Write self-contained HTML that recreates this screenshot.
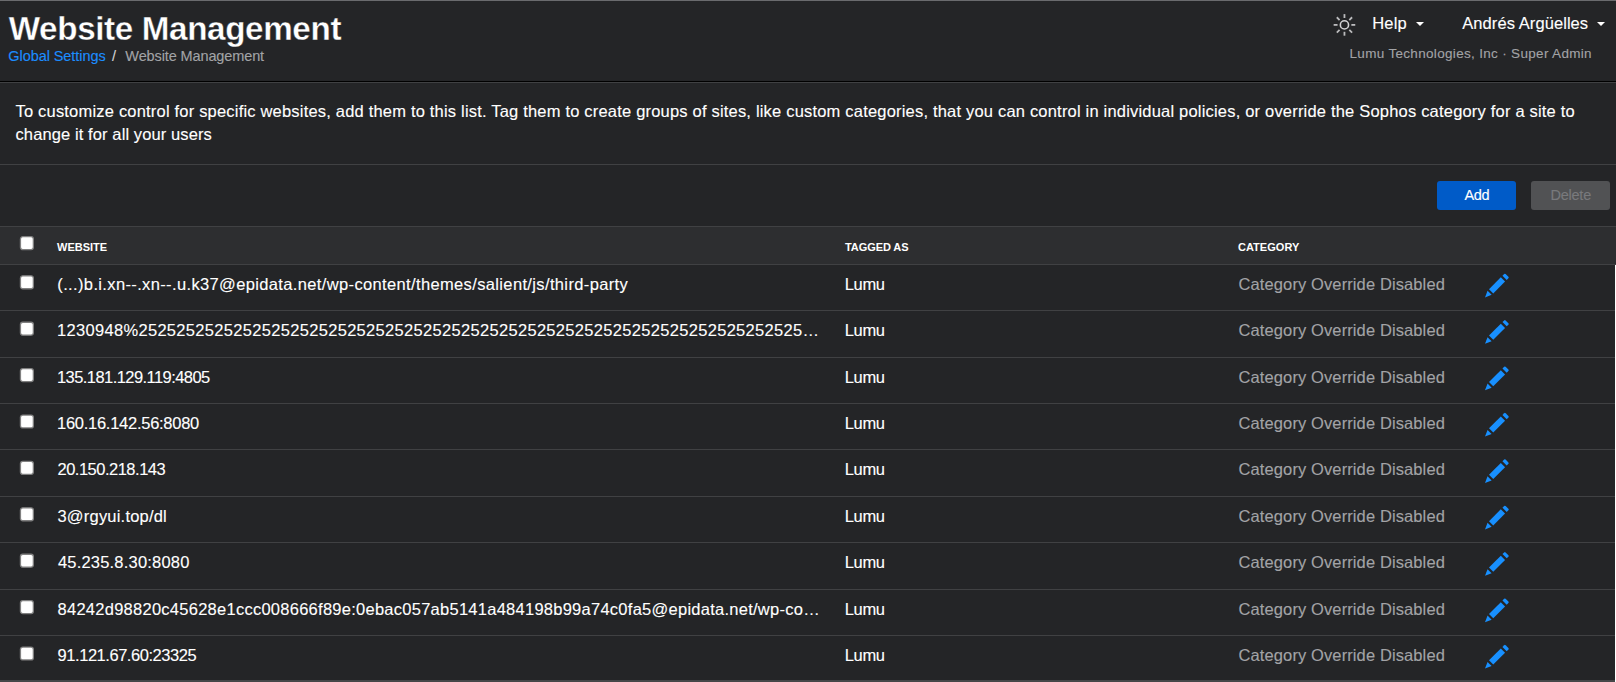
<!DOCTYPE html><html lang="en"><head><meta charset="utf-8"><title>Website Management</title><style>
html,body{margin:0;padding:0;background:#242527;}
body{width:1616px;height:682px;overflow:hidden;background:#242527;color:#fff;font-family:"Liberation Sans",sans-serif;position:relative;}
.a{position:absolute;white-space:nowrap;}
.t{position:absolute;white-space:nowrap;line-height:1;-webkit-text-stroke:0.12px currentColor;}
.ln{position:absolute;left:0;width:1616px;height:1px;}
.cb{position:absolute;left:18px;}
</style></head><body>
<div class="ln" style="top:0;background:#6a6b6e"></div>
<svg class="a" style="left:1332px;top:12px" width="26" height="26" viewBox="0 0 26 26"><g fill="none"><circle cx="12.45" cy="12.9" r="4.1" stroke="#d2d2d4" stroke-width="1.6"/><g stroke="#bcbcbe" stroke-width="1.8"><line x1="19.35" y1="12.90" x2="23.25" y2="12.90"/><line x1="17.33" y1="17.78" x2="20.09" y2="20.54"/><line x1="12.45" y1="19.80" x2="12.45" y2="23.70"/><line x1="7.57" y1="17.78" x2="4.81" y2="20.54"/><line x1="5.55" y1="12.90" x2="1.65" y2="12.90"/><line x1="7.57" y1="8.02" x2="4.81" y2="5.26"/><line x1="12.45" y1="6.00" x2="12.45" y2="2.10"/><line x1="17.33" y1="8.02" x2="20.09" y2="5.26"/></g></g></svg>
<div class="a" style="left:1415.5px;top:22px;width:0;height:0;border-left:4px solid transparent;border-right:4px solid transparent;border-top:4px solid #fff"></div>
<div class="a" style="left:1597px;top:22px;width:0;height:0;border-left:4px solid transparent;border-right:4px solid transparent;border-top:4px solid #fff"></div>
<div class="ln" style="top:81px;background:#000"></div>
<div class="ln" style="top:82px;background:#404143"></div>
<div class="ln" style="top:164px;background:#404143"></div>
<div class="a" style="left:1437px;top:181px;width:79px;height:29px;background:#005bc8;border-radius:3px;"></div>
<div class="a" style="left:1531px;top:181px;width:79px;height:29px;background:#515254;border-radius:3px;"></div>
<div class="ln" style="top:226px;background:#404143"></div>
<div class="ln" style="top:227px;height:37px;background:#2d2e30"></div>
<svg class="cb" style="top:234px" width="18" height="19" viewBox="0 0 18 19"><rect x="2.45" y="2.70" width="12.9" height="12.9" rx="2.3" fill="#fff" stroke="#808080" stroke-width="1.3"/></svg>
<div class="ln" style="top:264px;background:#404143"></div>
<svg class="cb" style="top:273px" width="18" height="19" viewBox="0 0 18 19"><rect x="2.45" y="2.85" width="12.9" height="12.9" rx="2.3" fill="#fff" stroke="#808080" stroke-width="1.3"/></svg>
<svg class="a" style="left:1480px;top:268px" width="36" height="36" viewBox="0 0 36 36"><g transform="translate(5,29.40) rotate(-45)" fill="#1890ff"><polygon points="0,0 6.5,-2.9 6.5,2.9"/><rect x="8.65" y="-3" width="16.7" height="6"/><path d="M27.7 -3 H30.1 a1 1 0 0 1 1 1 V2 a1 1 0 0 1 -1 1 H27.7 Z"/></g></svg>
<div class="ln" style="top:310px;background:#404143"></div>
<svg class="cb" style="top:319px" width="18" height="19" viewBox="0 0 18 19"><rect x="2.45" y="3.25" width="12.9" height="12.9" rx="2.3" fill="#fff" stroke="#808080" stroke-width="1.3"/></svg>
<svg class="a" style="left:1480px;top:314px" width="36" height="36" viewBox="0 0 36 36"><g transform="translate(5,29.80) rotate(-45)" fill="#1890ff"><polygon points="0,0 6.5,-2.9 6.5,2.9"/><rect x="8.65" y="-3" width="16.7" height="6"/><path d="M27.7 -3 H30.1 a1 1 0 0 1 1 1 V2 a1 1 0 0 1 -1 1 H27.7 Z"/></g></svg>
<div class="ln" style="top:357px;background:#404143"></div>
<svg class="cb" style="top:366px" width="18" height="19" viewBox="0 0 18 19"><rect x="2.45" y="2.65" width="12.9" height="12.9" rx="2.3" fill="#fff" stroke="#808080" stroke-width="1.3"/></svg>
<svg class="a" style="left:1480px;top:361px" width="36" height="36" viewBox="0 0 36 36"><g transform="translate(5,29.20) rotate(-45)" fill="#1890ff"><polygon points="0,0 6.5,-2.9 6.5,2.9"/><rect x="8.65" y="-3" width="16.7" height="6"/><path d="M27.7 -3 H30.1 a1 1 0 0 1 1 1 V2 a1 1 0 0 1 -1 1 H27.7 Z"/></g></svg>
<div class="ln" style="top:403px;background:#404143"></div>
<svg class="cb" style="top:412px" width="18" height="19" viewBox="0 0 18 19"><rect x="2.45" y="3.05" width="12.9" height="12.9" rx="2.3" fill="#fff" stroke="#808080" stroke-width="1.3"/></svg>
<svg class="a" style="left:1480px;top:407px" width="36" height="36" viewBox="0 0 36 36"><g transform="translate(5,29.60) rotate(-45)" fill="#1890ff"><polygon points="0,0 6.5,-2.9 6.5,2.9"/><rect x="8.65" y="-3" width="16.7" height="6"/><path d="M27.7 -3 H30.1 a1 1 0 0 1 1 1 V2 a1 1 0 0 1 -1 1 H27.7 Z"/></g></svg>
<div class="ln" style="top:449px;background:#404143"></div>
<svg class="cb" style="top:458px" width="18" height="19" viewBox="0 0 18 19"><rect x="2.45" y="3.45" width="12.9" height="12.9" rx="2.3" fill="#fff" stroke="#808080" stroke-width="1.3"/></svg>
<svg class="a" style="left:1480px;top:453px" width="36" height="36" viewBox="0 0 36 36"><g transform="translate(5,30.00) rotate(-45)" fill="#1890ff"><polygon points="0,0 6.5,-2.9 6.5,2.9"/><rect x="8.65" y="-3" width="16.7" height="6"/><path d="M27.7 -3 H30.1 a1 1 0 0 1 1 1 V2 a1 1 0 0 1 -1 1 H27.7 Z"/></g></svg>
<div class="ln" style="top:496px;background:#404143"></div>
<svg class="cb" style="top:505px" width="18" height="19" viewBox="0 0 18 19"><rect x="2.45" y="2.85" width="12.9" height="12.9" rx="2.3" fill="#fff" stroke="#808080" stroke-width="1.3"/></svg>
<svg class="a" style="left:1480px;top:500px" width="36" height="36" viewBox="0 0 36 36"><g transform="translate(5,29.40) rotate(-45)" fill="#1890ff"><polygon points="0,0 6.5,-2.9 6.5,2.9"/><rect x="8.65" y="-3" width="16.7" height="6"/><path d="M27.7 -3 H30.1 a1 1 0 0 1 1 1 V2 a1 1 0 0 1 -1 1 H27.7 Z"/></g></svg>
<div class="ln" style="top:542px;background:#404143"></div>
<svg class="cb" style="top:551px" width="18" height="19" viewBox="0 0 18 19"><rect x="2.45" y="3.25" width="12.9" height="12.9" rx="2.3" fill="#fff" stroke="#808080" stroke-width="1.3"/></svg>
<svg class="a" style="left:1480px;top:546px" width="36" height="36" viewBox="0 0 36 36"><g transform="translate(5,29.80) rotate(-45)" fill="#1890ff"><polygon points="0,0 6.5,-2.9 6.5,2.9"/><rect x="8.65" y="-3" width="16.7" height="6"/><path d="M27.7 -3 H30.1 a1 1 0 0 1 1 1 V2 a1 1 0 0 1 -1 1 H27.7 Z"/></g></svg>
<div class="ln" style="top:589px;background:#404143"></div>
<svg class="cb" style="top:598px" width="18" height="19" viewBox="0 0 18 19"><rect x="2.45" y="2.65" width="12.9" height="12.9" rx="2.3" fill="#fff" stroke="#808080" stroke-width="1.3"/></svg>
<svg class="a" style="left:1480px;top:593px" width="36" height="36" viewBox="0 0 36 36"><g transform="translate(5,29.20) rotate(-45)" fill="#1890ff"><polygon points="0,0 6.5,-2.9 6.5,2.9"/><rect x="8.65" y="-3" width="16.7" height="6"/><path d="M27.7 -3 H30.1 a1 1 0 0 1 1 1 V2 a1 1 0 0 1 -1 1 H27.7 Z"/></g></svg>
<div class="ln" style="top:635px;background:#404143"></div>
<svg class="cb" style="top:644px" width="18" height="19" viewBox="0 0 18 19"><rect x="2.45" y="3.05" width="12.9" height="12.9" rx="2.3" fill="#fff" stroke="#808080" stroke-width="1.3"/></svg>
<svg class="a" style="left:1480px;top:639px" width="36" height="36" viewBox="0 0 36 36"><g transform="translate(5,29.60) rotate(-45)" fill="#1890ff"><polygon points="0,0 6.5,-2.9 6.5,2.9"/><rect x="8.65" y="-3" width="16.7" height="6"/><path d="M27.7 -3 H30.1 a1 1 0 0 1 1 1 V2 a1 1 0 0 1 -1 1 H27.7 Z"/></g></svg>
<div class="t" id="title" style="left:8.74px;top:12px;font-size:33.2px;color:#fff;font-weight:700;-webkit-text-stroke:0.35px #242527;letter-spacing:-0.353px;">Website Management</div>
<div class="t" id="bc1" style="left:8.34px;top:49px;font-size:14.5px;color:#1c8dff;letter-spacing:-0.072px;">Global Settings</div>
<div class="t" id="bc2" style="left:111.92px;top:49px;font-size:14.5px;color:#d4d4d6;">/</div>
<div class="t" id="bc3" style="left:125.36px;top:49px;font-size:14.5px;color:#a2a3a6;letter-spacing:-0.120px;">Website Management</div>
<div class="t" id="help" style="left:1372.32px;top:15px;font-size:16.5px;color:#fff;letter-spacing:0.122px;">Help</div>
<div class="t" id="user" style="left:1462.29px;top:15px;font-size:16.5px;color:#fff;letter-spacing:0.073px;">Andrés Argüelles</div>
<div class="t" id="org" style="left:1349.51px;top:47px;font-size:13.5px;color:#a2a3a6;letter-spacing:0.321px;">Lumu Technologies, Inc · Super Admin</div>
<div class="t" id="d1" style="left:15.50px;top:103px;font-size:16.5px;color:#fff;letter-spacing:0.193px;">To customize control for specific websites, add them to this list. Tag them to create groups of sites, like custom categories, that you can control in individual policies, or override the Sophos category for a site to</div>
<div class="t" id="d2" style="left:15.50px;top:126px;font-size:16.5px;color:#fff;letter-spacing:0.104px;">change it for all your users</div>
<div class="t" id="addt" style="left:1464.46px;top:188px;font-size:14.5px;color:#fff;letter-spacing:-0.367px;">Add</div>
<div class="t" id="delt" style="left:1550.41px;top:188px;font-size:14.5px;color:#797a7d;letter-spacing:-0.225px;">Delete</div>
<div class="t" id="th1" style="left:57.11px;top:242px;font-size:11px;color:#fff;font-weight:700;-webkit-text-stroke:0;letter-spacing:-0.028px;">WEBSITE</div>
<div class="t" id="th2" style="left:845.06px;top:242px;font-size:11px;color:#fff;font-weight:700;-webkit-text-stroke:0;letter-spacing:-0.083px;">TAGGED AS</div>
<div class="t" id="th3" style="left:1237.98px;top:242px;font-size:11px;color:#fff;font-weight:700;-webkit-text-stroke:0;letter-spacing:0.035px;">CATEGORY</div>
<div class="t" id="w0" style="left:57.34px;top:276px;font-size:16.5px;color:#fff;letter-spacing:0.359px;">(...)b.i.xn--.xn--.u.k37@epidata.net/wp-content/themes/salient/js/third-party</div>
<div class="t" id="l0" style="left:844.74px;top:276px;font-size:16.5px;color:#fff;letter-spacing:-0.326px;">Lumu</div>
<div class="t" id="c0" style="left:1238.53px;top:276px;font-size:16.5px;color:#a2a3a6;letter-spacing:0.110px;">Category Override Disabled</div>
<div class="t" id="w1" style="left:57.03px;top:322px;font-size:16.5px;color:#fff;letter-spacing:0.311px;">1230948%2525252525252525252525252525252525252525252525252525252525252525252525…</div>
<div class="t" id="l1" style="left:844.74px;top:322px;font-size:16.5px;color:#fff;letter-spacing:-0.326px;">Lumu</div>
<div class="t" id="c1" style="left:1238.53px;top:322px;font-size:16.5px;color:#a2a3a6;letter-spacing:0.110px;">Category Override Disabled</div>
<div class="t" id="w2" style="left:57.03px;top:369px;font-size:16.5px;color:#fff;letter-spacing:-0.568px;">135.181.129.119:4805</div>
<div class="t" id="l2" style="left:844.74px;top:369px;font-size:16.5px;color:#fff;letter-spacing:-0.326px;">Lumu</div>
<div class="t" id="c2" style="left:1238.53px;top:369px;font-size:16.5px;color:#a2a3a6;letter-spacing:0.110px;">Category Override Disabled</div>
<div class="t" id="w3" style="left:57.03px;top:415px;font-size:16.5px;color:#fff;letter-spacing:-0.269px;">160.16.142.56:8080</div>
<div class="t" id="l3" style="left:844.74px;top:415px;font-size:16.5px;color:#fff;letter-spacing:-0.326px;">Lumu</div>
<div class="t" id="c3" style="left:1238.53px;top:415px;font-size:16.5px;color:#a2a3a6;letter-spacing:0.110px;">Category Override Disabled</div>
<div class="t" id="w4" style="left:57.53px;top:461px;font-size:16.5px;color:#fff;letter-spacing:-0.505px;">20.150.218.143</div>
<div class="t" id="l4" style="left:844.74px;top:461px;font-size:16.5px;color:#fff;letter-spacing:-0.326px;">Lumu</div>
<div class="t" id="c4" style="left:1238.53px;top:461px;font-size:16.5px;color:#a2a3a6;letter-spacing:0.110px;">Category Override Disabled</div>
<div class="t" id="w5" style="left:57.48px;top:508px;font-size:16.5px;color:#fff;letter-spacing:0.206px;">3@rgyui.top/dl</div>
<div class="t" id="l5" style="left:844.74px;top:508px;font-size:16.5px;color:#fff;letter-spacing:-0.326px;">Lumu</div>
<div class="t" id="c5" style="left:1238.53px;top:508px;font-size:16.5px;color:#a2a3a6;letter-spacing:0.110px;">Category Override Disabled</div>
<div class="t" id="w6" style="left:57.90px;top:554px;font-size:16.5px;color:#fff;letter-spacing:0.202px;">45.235.8.30:8080</div>
<div class="t" id="l6" style="left:844.74px;top:554px;font-size:16.5px;color:#fff;letter-spacing:-0.326px;">Lumu</div>
<div class="t" id="c6" style="left:1238.53px;top:554px;font-size:16.5px;color:#a2a3a6;letter-spacing:0.110px;">Category Override Disabled</div>
<div class="t" id="w7" style="left:57.55px;top:601px;font-size:16.5px;color:#fff;letter-spacing:0.259px;">84242d98820c45628e1ccc008666f89e:0ebac057ab5141a484198b99a74c0fa5@epidata.net/wp-co…</div>
<div class="t" id="l7" style="left:844.74px;top:601px;font-size:16.5px;color:#fff;letter-spacing:-0.326px;">Lumu</div>
<div class="t" id="c7" style="left:1238.53px;top:601px;font-size:16.5px;color:#a2a3a6;letter-spacing:0.110px;">Category Override Disabled</div>
<div class="t" id="w8" style="left:57.61px;top:647px;font-size:16.5px;color:#fff;letter-spacing:-0.461px;">91.121.67.60:23325</div>
<div class="t" id="l8" style="left:844.74px;top:647px;font-size:16.5px;color:#fff;letter-spacing:-0.326px;">Lumu</div>
<div class="t" id="c8" style="left:1238.53px;top:647px;font-size:16.5px;color:#a2a3a6;letter-spacing:0.110px;">Category Override Disabled</div>
<div class="ln" style="top:680px;height:2px;background:#454648"></div>
<div class="a" style="left:1615px;top:265px;width:1px;height:417px;background:#fff"></div>
</body></html>
